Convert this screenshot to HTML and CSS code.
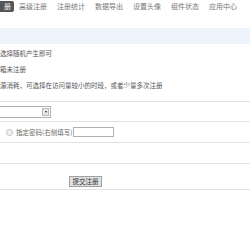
FILE: index.html
```html
<!DOCTYPE html>
<html>
<head>
<meta charset="utf-8">
<link rel="stylesheet" href="styles.css">
</head>
<body>
<div class="nav">
  <span class="tab-active">册</span>
  <span class="tab">高级注册</span>
  <span class="tab">注册统计</span>
  <span class="tab">数据导出</span>
  <span class="tab">设置头像</span>
  <span class="tab">组件状态</span>
  <span class="tab">应用中心</span>
</div>
<div class="band"></div>
<div class="notes">
  <div class="note">选择随机产生即可</div>
  <div class="note">箱未注册</div>
  <div class="note">源消耗，可选择在访问量较小的时段，或者少量多次注册</div>
</div>
<div class="rows">
  <div class="row row-select">
    <div class="select"><span class="select-btn"><span class="arrow"></span></span></div>
  </div>
  <div class="row row-radio">
    <span class="radio"></span>
    <span class="label">指定密码(右侧填写)</span>
    <span class="input"></span>
  </div>
  <div class="row row-empty"></div>
  <div class="row row-submit">
    <span class="button">提交注册</span>
  </div>
</div>
</body>
</html>
```
FILE: styles.css
```css
html, body {
  margin: 0;
  padding: 0;
  background: #fff;
  font-family: "Noto Sans CJK SC", "Noto Sans", sans-serif;
  color: #444;
  overflow: hidden;
}
.nav {
  height: 28px;
  display: flex;
  align-items: flex-start;
  gap: 10px;
  padding-top: 1px;
  box-sizing: border-box;
}
.tab-active {
  width: 14px;
  height: 11px;
  background: #555;
  color: #fff;
  font-size: 7px;
  line-height: 11px;
  text-align: right;
  padding-right: 3px;
  box-sizing: border-box;
  margin-right: -5px;
  border-radius: 0 2px 2px 0;
}
.tab {
  font-size: 7px;
  line-height: 11px;
  color: #777;
  white-space: nowrap;
}
.band {
  height: 16px;
  background: #eef4fb;
}
.notes {
  padding-top: 1px;
  height: 56px;
}
.note {
  font-size: 6.5px;
  line-height: 16px;
  color: #555;
  white-space: nowrap;
}
.rows {
  border-bottom: 1px solid #e3e3e3;
}
.row {
  border-top: 1px solid #e3e3e3;
  display: flex;
  align-items: center;
}
.row-select {
  height: 19px;
}
.select {
  width: 53px;
  height: 12px;
  margin-left: -2px;
  border: 1px solid #b0b0b0;
  box-sizing: border-box;
  background: #fff;
  display: flex;
  justify-content: flex-end;
  align-items: center;
  padding-right: 1px;
}
.select-btn {
  width: 7px;
  height: 8px;
  background: #e8e8e8;
  border: 1px solid #b8b8b8;
  box-sizing: border-box;
  display: flex;
  align-items: center;
  justify-content: center;
}
.arrow {
  width: 0;
  height: 0;
  border-left: 1.5px solid transparent;
  border-right: 1.5px solid transparent;
  border-top: 2px solid #333;
}
.row-radio {
  height: 20px;
}
.radio {
  width: 5px;
  height: 5px;
  border: 1px solid #c0c0c0;
  border-radius: 50%;
  background: #f2f2f2;
  margin-left: 6px;
  margin-right: 3px;
}
.label {
  font-size: 6.5px;
  color: #666;
  white-space: nowrap;
}
.input {
  width: 41px;
  height: 10px;
  border: 1px solid #b0b0b0;
  box-sizing: border-box;
  background: #fff;
  margin-left: 1px;
}
.row-empty {
  height: 20px;
}
.row-submit {
  height: 26px;
  align-items: flex-end;
  padding-bottom: 1px;
  box-sizing: border-box;
}
.button {
  margin-left: 69px;
  width: 33px;
  height: 11px;
  background: #e1e1e1;
  border: 1px solid #a0a0a0;
  box-sizing: border-box;
  font-size: 6.5px;
  line-height: 9px;
  text-align: center;
  color: #333;
  margin-bottom: 1px;
}
```
